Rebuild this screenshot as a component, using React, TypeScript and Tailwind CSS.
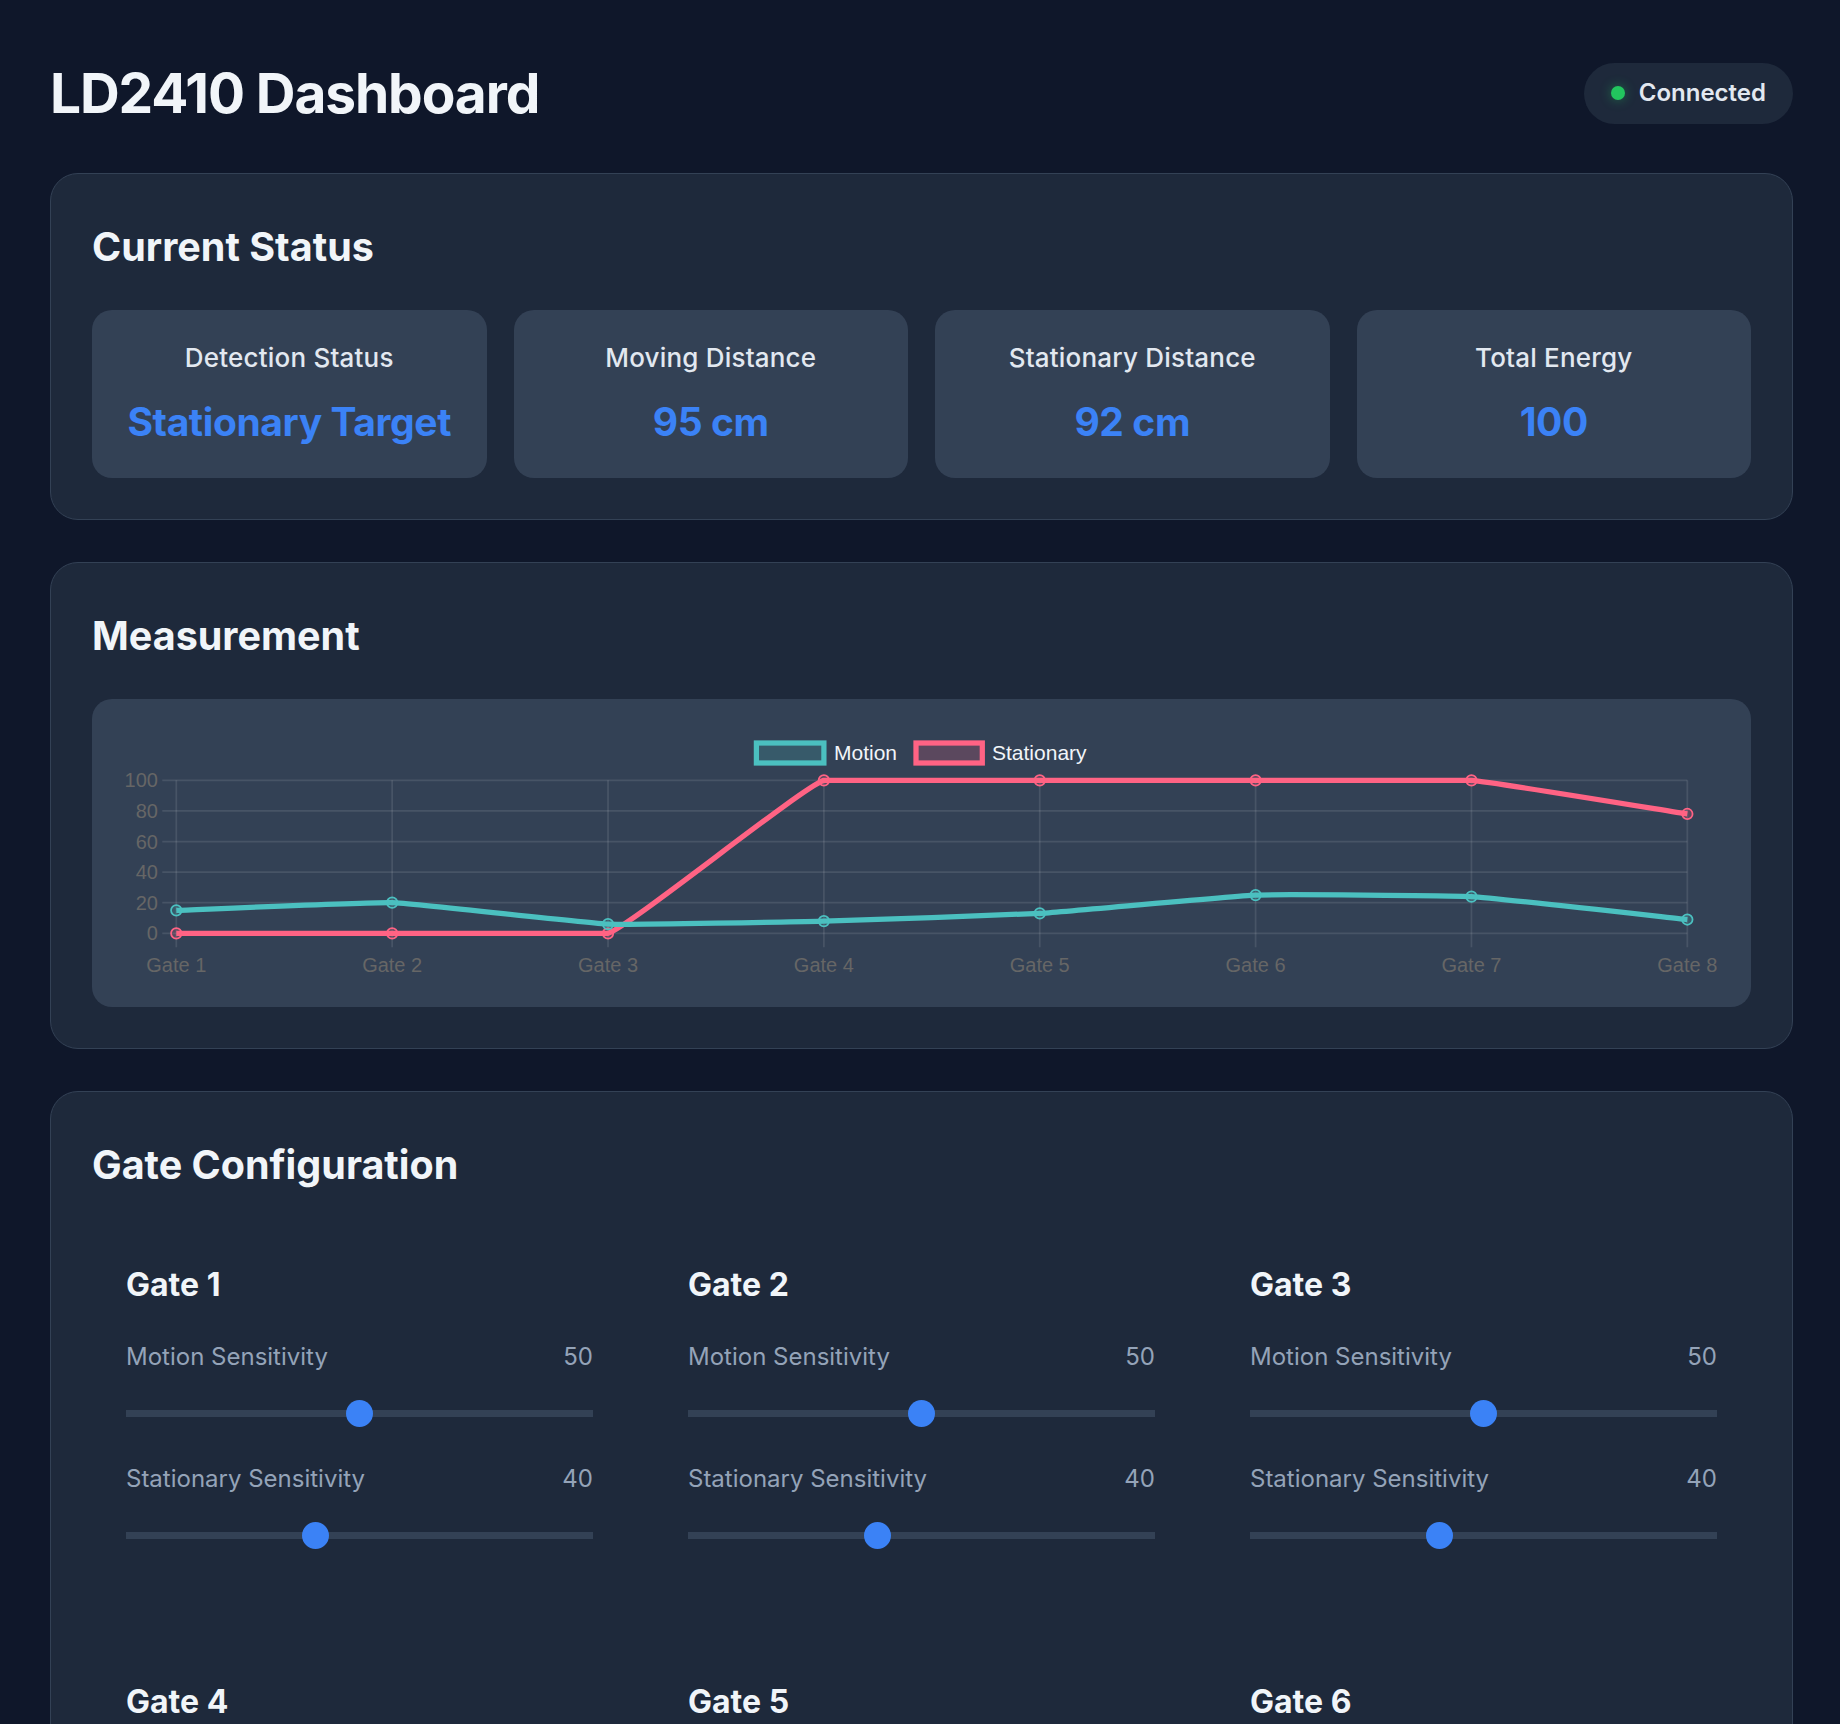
import React from "react"

const motion = [15, 20, 6, 8, 13, 25, 24, 9]
const stationary = [0, 0, 0, 100, 100, 100, 100, 78]
const gateLabels = ["Gate 1", "Gate 2", "Gate 3", "Gate 4", "Gate 5", "Gate 6", "Gate 7", "Gate 8"]

// chart geometry (px inside the chart panel)
const CW = 1659
const CH = 308
const X0 = 84.3
const DX = 215.86
const YTOP = 81.3
const YBOT = 234.3
const TICK = 14

const gx = (i: number) => X0 + DX * i
const gy = (v: number) => YBOT - ((YBOT - YTOP) * v) / 100

// same curve maths as chart.js splineCurve with tension 0.1
function linePath(values: number[], t = 0.1) {
  const pts = values.map((v, i) => ({ x: gx(i), y: gy(v) }))
  const clampY = (y: number) => Math.min(Math.max(y, YTOP), YBOT)
  const cps = pts.map((cur, i) => {
    const prev = pts[i - 1] ?? cur
    const next = pts[i + 1] ?? cur
    const d01 = Math.hypot(cur.x - prev.x, cur.y - prev.y)
    const d12 = Math.hypot(next.x - cur.x, next.y - cur.y)
    const s01 = d01 + d12 === 0 ? 0 : d01 / (d01 + d12)
    const s12 = d01 + d12 === 0 ? 0 : d12 / (d01 + d12)
    const fa = t * s01
    const fb = t * s12
    return {
      prev: { x: cur.x - fa * (next.x - prev.x), y: clampY(cur.y - fa * (next.y - prev.y)) },
      next: { x: cur.x + fb * (next.x - prev.x), y: clampY(cur.y + fb * (next.y - prev.y)) },
    }
  })
  let d = `M${pts[0].x},${pts[0].y}`
  for (let i = 1; i < pts.length; i++) {
    d += ` C${cps[i - 1].next.x},${cps[i - 1].next.y} ${cps[i].prev.x},${cps[i].prev.y} ${pts[i].x},${pts[i].y}`
  }
  return d
}

function MeasurementChart() {
  const grid = "rgba(255,255,255,0.1)"
  const font = "'Liberation Sans', Arial, sans-serif"
  const series = [
    { label: "Stationary", data: stationary, color: "#ff6384", fill: "rgba(255,99,132,0.2)" },
    { label: "Motion", data: motion, color: "#4bc0c0", fill: "rgba(75,192,192,0.2)" },
  ]
  return (
    <svg width="100%" height={CH} viewBox={`0 0 ${CW} ${CH}`} className="block">
      {/* legend */}
      <rect x={664.4} y={44} width={67.5} height={20} fill="rgba(75,192,192,0.2)" stroke="#4bc0c0" strokeWidth={5.25} />
      <text x={742} y={61.3} fontFamily={font} fontSize={21} fill="#f1f5f9">Motion</text>
      <rect x={824} y={44} width={66.3} height={20} fill="rgba(255,99,132,0.2)" stroke="#ff6384" strokeWidth={5.25} />
      <text x={900} y={61.3} fontFamily={font} fontSize={21} fill="#f1f5f9">Stationary</text>

      {/* grid */}
      {[0, 20, 40, 60, 80, 100].map((v) => (
        <g key={v}>
          <line x1={X0 - TICK} x2={gx(7)} y1={gy(v)} y2={gy(v)} stroke={grid} strokeWidth={1.75} />
          <text x={65.9} y={gy(v) + 7} textAnchor="end" fontFamily={font} fontSize={20} fill="#666">
            {v}
          </text>
        </g>
      ))}
      {gateLabels.map((g, i) => (
        <g key={g}>
          <line x1={gx(i)} x2={gx(i)} y1={YTOP} y2={YBOT + TICK} stroke={grid} strokeWidth={1.75} />
          <text x={gx(i)} y={273} textAnchor="middle" fontFamily={font} fontSize={20} fill="#666">
            {g}
          </text>
        </g>
      ))}

      {/* data */}
      {series.map((s) => (
        <g key={s.label}>
          <path d={linePath(s.data)} fill="none" stroke={s.color} strokeWidth={5.25} strokeLinejoin="round" />
          {s.data.map((v, i) => (
            <circle key={i} cx={gx(i)} cy={gy(v)} r={5.25} fill={s.fill} stroke={s.color} strokeWidth={1.75} />
          ))}
        </g>
      ))}
    </svg>
  )
}

function StatBox({ label, value }: { label: string; value: string }) {
  return (
    <div className="rounded-[20px] bg-[#334155] pt-[29px] pb-[27px] text-center">
      <div className="text-[26px] leading-[37px] font-medium tracking-[0.2px] text-[#e2e8f0]">{label}</div>
      <div className="mt-[17px] text-[39px] leading-[58px] font-bold tracking-[-0.4px] text-[#3b82f6]">{value}</div>
    </div>
  )
}

function Slider({ label, value }: { label: string; value: number }) {
  return (
    <div>
      <div className="flex justify-between text-[24px] leading-[36px] text-[#94a3b8]">
        <span>{label}</span>
        <span>{value}</span>
      </div>
      <div className="relative mt-[25px] mb-[34px] flex h-[27px] items-center">
        <div className="h-[7px] w-full bg-[#334155]" />
        <div
          className="absolute top-0 h-[27px] w-[27px] rounded-full bg-[#3b82f6]"
          style={{ left: `calc((100% - 27px) * ${value / 100})` }}
        />
      </div>
    </div>
  )
}

function GateCard({ n }: { n: number }) {
  return (
    <div className="px-[34px] pt-[34px] pb-[40px]">
      <h3 className="mb-[36px] text-[32px] leading-[36px] font-bold text-[#f1f5f9]">Gate {n}</h3>
      <Slider label="Motion Sensitivity" value={50} />
      <Slider label="Stationary Sensitivity" value={40} />
    </div>
  )
}

function Card({ title, children }: { title: string; children: React.ReactNode }) {
  return (
    <section className="rounded-[28px] border border-[#334155] bg-[#1e293b] p-[41px]">
      <h2 className="mt-[9px] mb-[40px] text-[39.5px] leading-[46px] font-bold text-[#f1f5f9]">{title}</h2>
      {children}
    </section>
  )
}

export default function App() {
  return (
    <div className="min-h-screen bg-[#0f172a] pt-[60px] pr-[47px] pb-[60px] pl-[50px] font-['Inter','Noto_Sans',sans-serif] text-[#f1f5f9]">
      <header className="mb-[47px] flex h-[66px] items-center justify-between">
        <h1 className="text-[55px] leading-[66px] font-bold tracking-[-1.1px]">LD2410 Dashboard</h1>
        <div className="flex h-[61px] items-center gap-[14px] rounded-full bg-[#1e293b] px-[27px]">
          <span className="h-[14px] w-[14px] rounded-full bg-[#22c55e] shadow-[0_0_12px_rgba(34,197,94,0.45)]" />
          <span className="text-[24px] font-semibold text-[#e2e8f0]">Connected</span>
        </div>
      </header>

      <div className="flex flex-col gap-[42px]">
        <Card title="Current Status">
          <div className="grid grid-cols-4 gap-[27px]">
            <StatBox label="Detection Status" value="Stationary Target" />
            <StatBox label="Moving Distance" value="95 cm" />
            <StatBox label="Stationary Distance" value="92 cm" />
            <StatBox label="Total Energy" value="100" />
          </div>
        </Card>

        <Card title="Measurement">
          <div className="rounded-[20px] bg-[#334155]">
            <MeasurementChart />
          </div>
        </Card>

        <Card title="Gate Configuration">
          <div className="grid grid-cols-3 gap-[27px] pt-[5px]">
            {[1, 2, 3, 4, 5, 6, 7, 8].map((n) => (
              <GateCard key={n} n={n} />
            ))}
          </div>
        </Card>
      </div>
    </div>
  )
}
